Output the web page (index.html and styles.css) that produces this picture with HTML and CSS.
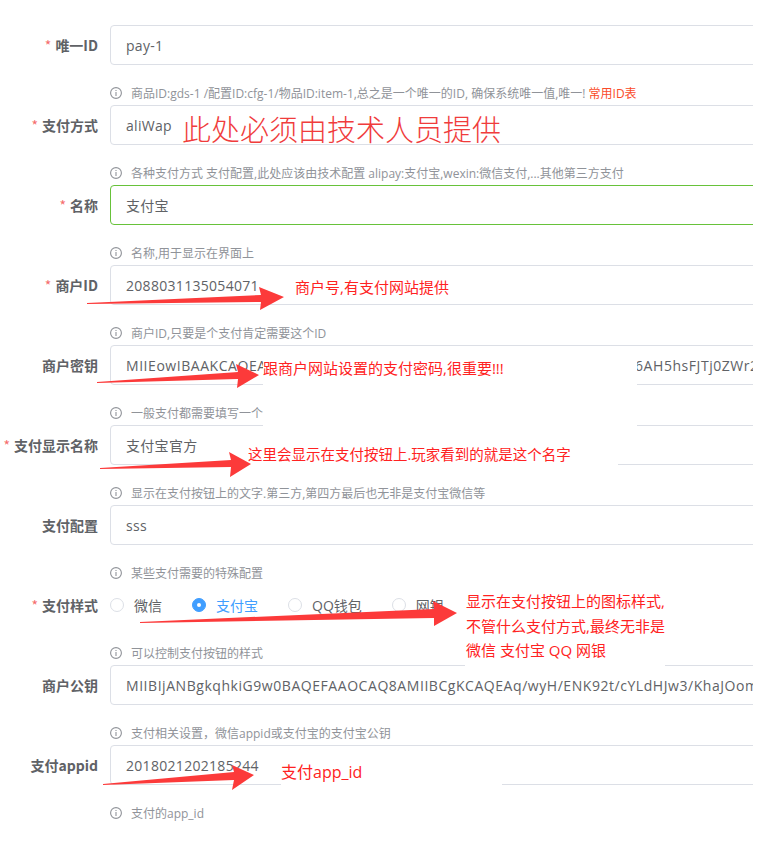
FILE: index.html
```html
<!DOCTYPE html>
<html lang="zh-CN">
<head>
    <meta charset="UTF-8">
    <meta name="viewport" content="width=device-width, initial-scale=1.0">
    <title>支付配置</title>
    <link rel="stylesheet" href="styles.css">
</head>
<body>
<div class="page">
    <form class="form">
        <div class="item">
            <label class="label required">唯一ID</label>
            <div class="content">
                <input class="field" value="pay-1" readonly>
                <div class="tip">
                    <svg class="tip-icon" viewBox="0 0 12 12"><circle cx="6" cy="6" r="5.4"/><line x1="6" y1="5" x2="6" y2="9"/><line x1="6" y1="3" x2="6" y2="4"/></svg>
                    <span>商品ID:gds-1 /配置ID:cfg-1/物品ID:item-1,总之是一个唯一的ID, 确保系统唯一值,唯一! <a class="tip-link">常用ID表</a></span>
                </div>
            </div>
        </div>

        <div class="item">
            <label class="label required">支付方式</label>
            <div class="content">
                <input class="field" value="aliWap" readonly>
                <div class="tip">
                    <svg class="tip-icon" viewBox="0 0 12 12"><circle cx="6" cy="6" r="5.4"/><line x1="6" y1="5" x2="6" y2="9"/><line x1="6" y1="3" x2="6" y2="4"/></svg>
                    <span>各种支付方式 支付配置,此处应该由技术配置 alipay:支付宝,wexin:微信支付,...其他第三方支付</span>
                </div>
            </div>
        </div>

        <div class="item">
            <label class="label required">名称</label>
            <div class="content">
                <input class="field is-success" value="支付宝" readonly>
                <div class="tip">
                    <svg class="tip-icon" viewBox="0 0 12 12"><circle cx="6" cy="6" r="5.4"/><line x1="6" y1="5" x2="6" y2="9"/><line x1="6" y1="3" x2="6" y2="4"/></svg>
                    <span>名称,用于显示在界面上</span>
                </div>
            </div>
        </div>

        <div class="item">
            <label class="label required">商户ID</label>
            <div class="content">
                <input class="field" value="2088031135054071" readonly>
                <div class="tip">
                    <svg class="tip-icon" viewBox="0 0 12 12"><circle cx="6" cy="6" r="5.4"/><line x1="6" y1="5" x2="6" y2="9"/><line x1="6" y1="3" x2="6" y2="4"/></svg>
                    <span>商户ID,只要是个支付肯定需要这个ID</span>
                </div>
            </div>
        </div>

        <div class="item">
            <label class="label">商户密钥</label>
            <div class="content">
                <input class="field field-key" value="MIIEowIBAAKCAQEAv3GkTqLwZbP8r0c1xN4fUjYhRdKm2sQe7Wp9HtLzAo6AH5hsFJTj0ZWr2Kp7qLmN" readonly>
                <div class="tip">
                    <svg class="tip-icon" viewBox="0 0 12 12"><circle cx="6" cy="6" r="5.4"/><line x1="6" y1="5" x2="6" y2="9"/><line x1="6" y1="3" x2="6" y2="4"/></svg>
                    <span>一般支付都需要填写一个</span>
                </div>
            </div>
        </div>

        <div class="item">
            <label class="label required">支付显示名称</label>
            <div class="content">
                <input class="field" value="支付宝官方" readonly>
                <div class="tip">
                    <svg class="tip-icon" viewBox="0 0 12 12"><circle cx="6" cy="6" r="5.4"/><line x1="6" y1="5" x2="6" y2="9"/><line x1="6" y1="3" x2="6" y2="4"/></svg>
                    <span>显示在支付按钮上的文字.第三方,第四方最后也无非是支付宝微信等</span>
                </div>
            </div>
        </div>

        <div class="item">
            <label class="label">支付配置</label>
            <div class="content">
                <input class="field" value="sss" readonly>
                <div class="tip">
                    <svg class="tip-icon" viewBox="0 0 12 12"><circle cx="6" cy="6" r="5.4"/><line x1="6" y1="5" x2="6" y2="9"/><line x1="6" y1="3" x2="6" y2="4"/></svg>
                    <span>某些支付需要的特殊配置</span>
                </div>
            </div>
        </div>

        <div class="item">
            <label class="label required">支付样式</label>
            <div class="content">
                <div class="radios">
                    <span class="radio"><span class="radio-dot"></span><span class="radio-text">微信</span></span>
                    <span class="radio is-checked"><span class="radio-dot"></span><span class="radio-text">支付宝</span></span>
                    <span class="radio"><span class="radio-dot"></span><span class="radio-text">QQ钱包</span></span>
                    <span class="radio"><span class="radio-dot"></span><span class="radio-text">网银</span></span>
                </div>
                <div class="tip">
                    <svg class="tip-icon" viewBox="0 0 12 12"><circle cx="6" cy="6" r="5.4"/><line x1="6" y1="5" x2="6" y2="9"/><line x1="6" y1="3" x2="6" y2="4"/></svg>
                    <span>可以控制支付按钮的样式</span>
                </div>
            </div>
        </div>

        <div class="item">
            <label class="label">商户公钥</label>
            <div class="content">
                <input class="field field-key" value="MIIBIjANBgkqhkiG9w0BAQEFAAOCAQ8AMIIBCgKCAQEAq/wyH/ENK92t/cYLdHJw3/KhaJOomXr8sLpQ2vT" readonly>
                <div class="tip">
                    <svg class="tip-icon" viewBox="0 0 12 12"><circle cx="6" cy="6" r="5.4"/><line x1="6" y1="5" x2="6" y2="9"/><line x1="6" y1="3" x2="6" y2="4"/></svg>
                    <span>支付相关设置，微信appid或支付宝的支付宝公钥</span>
                </div>
            </div>
        </div>

        <div class="item">
            <label class="label">支付appid</label>
            <div class="content">
                <input class="field" value="2018021202185244" readonly>
                <div class="tip">
                    <svg class="tip-icon" viewBox="0 0 12 12"><circle cx="6" cy="6" r="5.4"/><line x1="6" y1="5" x2="6" y2="9"/><line x1="6" y1="3" x2="6" y2="4"/></svg>
                    <span>支付的app_id</span>
                </div>
            </div>
        </div>
    </form>

    <!-- annotations pasted over the screenshot -->
    <div class="note note-big">此处必须由技术人员提供</div>
    <div class="note note-mchid">商户号,有支付网站提供</div>
    <div class="note note-key">跟商户网站设置的支付密码,很重要!!!</div>
    <div class="note note-name">这里会显示在支付按钮上.玩家看到的就是这个名字</div>
    <div class="note note-style">显示在支付按钮上的图标样式,<br>不管什么支付方式,最终无非是<br>微信 支付宝 QQ 网银</div>
    <div class="note note-appid">支付app_id</div>

    <svg class="arrows" viewBox="0 0 773 841">
        <polygon points="87,303 261,295 259,287 284,297 260,310 261,302 87,304"/>
        <polygon points="97,382 238,372 236,364 259,375 237,388 238,379 97,383"/>
        <polygon points="100,468 231,460 229,452 251,464 230,477 231,467 100,469"/>
        <polygon points="140,622 434,609 433,601 457,613 434,626 434,618 140,623"/>
        <polygon points="103,784 234,772 232,765 254,775 232,790 234,780 103,785"/>
    </svg>
</div>
</body>
</html>
```

FILE: styles.css
```css
body {
    margin: 0;
    background: #fff;
    font-family: "Open Sans", "Noto Sans CJK SC", sans-serif;
    color: #606266;
}
.page {
    position: relative;
    width: 753px;
    height: 841px;
    overflow: hidden;
}
.form {
    padding-top: 25px;
}
.item {
    display: flex;
    margin-bottom: 3px;
}
.label {
    width: 110px;
    flex-shrink: 0;
    box-sizing: border-box;
    padding-right: 12px;
    text-align: right;
    line-height: 40px;
    font-size: 14px;
    font-weight: 700;
    color: #606266;
    font-family: "Noto Sans CJK SC", sans-serif;
}
.label.required::before {
    content: "*";
    color: #f56c6c;
    margin-right: 4px;
    font-weight: 400;
}
.content {
    width: 690px;
    flex-shrink: 0;
}
.field {
    display: block;
    width: 100%;
    height: 40px;
    box-sizing: border-box;
    padding: 0 15px;
    border: 1px solid #dcdfe6;
    border-radius: 4px;
    font-family: "Open Sans", "Noto Sans CJK SC", sans-serif;
    font-size: 14px;
    letter-spacing: 0.3px;
    color: #606266;
    background: #fff;
    outline: none;
}
.field-key {
    letter-spacing: 0.55px;
}
.field.is-success {
    border-color: #67c23a;
}
.tip {
    display: flex;
    align-items: center;
    gap: 9px;
    margin-top: 19px;
    height: 18px;
    font-size: 12px;
    color: #909399;
    white-space: nowrap;
}
.tip-icon {
    width: 12px;
    height: 12px;
    flex-shrink: 0;
    fill: none;
    stroke: #909399;
    stroke-width: 1.1;
}
.tip-link {
    color: #fa4b2a;
}
.radios {
    display: flex;
    align-items: center;
    height: 40px;
}
.radio {
    display: flex;
    align-items: center;
    margin-right: 30px;
    font-size: 14px;
    color: #606266;
}
.radio-dot {
    width: 14px;
    height: 14px;
    box-sizing: border-box;
    border: 1px solid #dcdfe6;
    border-radius: 50%;
    position: relative;
}
.radio-text {
    padding-left: 10px;
}
.radio.is-checked .radio-dot {
    background: #409eff;
    border-color: #409eff;
}
.radio.is-checked .radio-dot::after {
    content: "";
    position: absolute;
    left: 4px;
    top: 4px;
    width: 4px;
    height: 4px;
    border-radius: 50%;
    background: #fff;
}
.radio.is-checked .radio-text {
    color: #409eff;
}

/* red notes and arrows drawn on top */
.note {
    position: absolute;
    color: #ff2222;
    font-size: 15px;
    white-space: nowrap;
    font-family: "Open Sans", "Noto Sans CJK SC", sans-serif;
}
.note-big {
    left: 182px;
    top: 113px;
    font-size: 29px;
    line-height: 34px;
    color: #f03c3c;
    font-weight: 300;
}
.note-mchid {
    left: 295px;
    top: 277px;
    line-height: 20px;
}
.note-key {
    left: 263px;
    top: 349px;
    width: 374px;
    height: 82px;
    padding-top: 9px;
    box-sizing: border-box;
    line-height: 20px;
    background: #fff;
}
.note-name {
    left: 247px;
    top: 440px;
    width: 371px;
    height: 28px;
    box-sizing: border-box;
    padding: 5px 0 0 1px;
    line-height: 20px;
    font-size: 14.5px;
    background: #fff;
}
.note-style {
    left: 465px;
    top: 589px;
    width: 200px;
    height: 78px;
    line-height: 24.5px;
    padding-left: 1px;
    box-sizing: border-box;
    background: #fff;
}
.note-appid {
    left: 281px;
    top: 761px;
    width: 221px;
    height: 26px;
    line-height: 22px;
    font-size: 16px;
    background: #fff;
}
.arrows {
    position: absolute;
    left: 0;
    top: 0;
    width: 773px;
    height: 841px;
    fill: #fc3a3a;
    pointer-events: none;
}
```
